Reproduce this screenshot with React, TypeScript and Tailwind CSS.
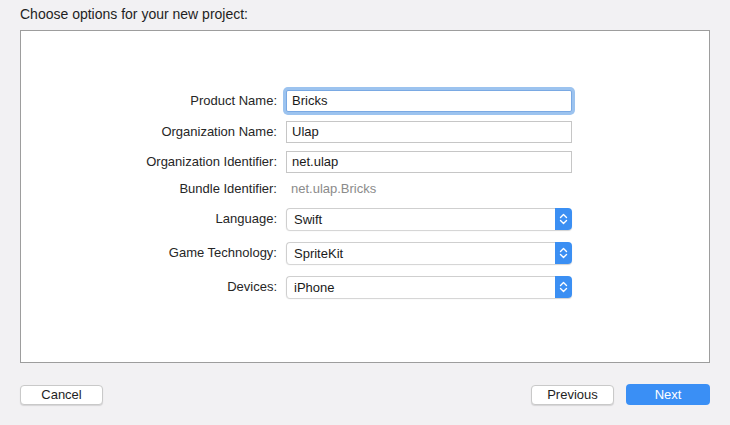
import React from "react";

function Chevrons() {
  return (
    <svg width="9" height="14" viewBox="0 0 9 14" fill="none">
      <path d="M1.5 5.5 L4.5 2.5 L7.5 5.5" stroke="white" strokeWidth="1.4" strokeLinecap="round" strokeLinejoin="round" />
      <path d="M1.5 8.5 L4.5 11.5 L7.5 8.5" stroke="white" strokeWidth="1.4" strokeLinecap="round" strokeLinejoin="round" />
    </svg>
  );
}

function Label({ children }: { children: React.ReactNode }) {
  return <div className="w-[257px] shrink-0 text-right pr-[1px] text-[#262626]">{children}</div>;
}

function TextField({ value, focused }: { value: string; focused?: boolean }) {
  return (
    <div
      className={
        "ml-[8px] w-[286px] h-[22px] bg-white border flex items-center pl-[5px] text-[#1a1a1a] " +
        (focused
          ? "border-[#7aa9e3] rounded-[2px] shadow-[0_0_0_3px_#9cc3ef]"
          : "border-[#c6c6c6]")
      }
    >
      {value}
    </div>
  );
}

function Popup({ value }: { value: string }) {
  return (
    <div className="ml-[8px] w-[286px] h-[22px] flex rounded-[4px] shadow-[0_1px_1px_rgba(0,0,0,0.18)]">
      <div className="flex-1 bg-white border-t border-l border-[#cfcfcf] rounded-l-[4px] flex items-center pl-[7px] text-[#1a1a1a]">
        {value}
      </div>
      <div className="w-[17px] bg-[#3b8ff3] rounded-r-[4px] flex items-center justify-center">
        <Chevrons />
      </div>
    </div>
  );
}

export default function App() {
  return (
    <div className="w-[730px] h-[425px] bg-[#f2f1f3] flex flex-col font-['Liberation_Sans',Arial,sans-serif] text-[13px] text-[#1e1e1e]">
      <div className="h-[30px] pl-[20px] pt-[6px] leading-[16px] text-[14px]">Choose options for your new project:</div>
      <div className="mx-[20px] h-[333px] border border-[#9d9d9d] bg-white flex flex-col pt-[58px]">
        <div className="flex items-center h-[24px]">
          <Label>Product Name:</Label>
          <TextField value="Bricks" focused />
        </div>
        <div className="flex items-center h-[22px] mt-[8px]">
          <Label>Organization Name:</Label>
          <TextField value="Ulap" />
        </div>
        <div className="flex items-center h-[22px] mt-[8px]">
          <Label>Organization Identifier:</Label>
          <TextField value="net.ulap" />
        </div>
        <div className="flex items-center h-[20px] mt-[6px]">
          <Label>Bundle Identifier:</Label>
          <div className="ml-[8px] pl-[5px] text-[#8b8b8b]">net.ulap.Bricks</div>
        </div>
        <div className="flex items-center h-[22px] mt-[9px]">
          <Label>Language:</Label>
          <Popup value="Swift" />
        </div>
        <div className="flex items-center h-[22px] mt-[12px]">
          <Label>Game Technology:</Label>
          <Popup value="SpriteKit" />
        </div>
        <div className="flex items-center h-[22px] mt-[12px]">
          <Label>Devices:</Label>
          <Popup value="iPhone" />
        </div>
      </div>
      <div className="flex items-center px-[20px] mt-[21px]">
        <button className="w-[83px] h-[20px] bg-white border border-[#c9c9c9] rounded-[4px] shadow-[0_1px_1px_rgba(0,0,0,0.12)] text-[#1e1e1e] leading-[18px]">
          Cancel
        </button>
        <div className="flex-1" />
        <button className="w-[83px] h-[20px] bg-white border border-[#c9c9c9] rounded-[4px] shadow-[0_1px_1px_rgba(0,0,0,0.12)] text-[#1e1e1e] leading-[18px]">
          Previous
        </button>
        <button className="ml-[12px] w-[84px] h-[21px] bg-[#3a8ff5] rounded-[4px] text-white leading-[21px]">
          Next
        </button>
      </div>
    </div>
  );
}
